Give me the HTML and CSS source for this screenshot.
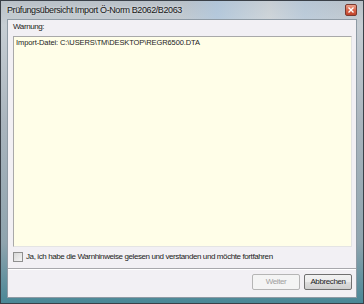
FILE: index.html
```html
<!DOCTYPE html>
<html lang="de">
<head>
  <meta charset="UTF-8">
  <title>Prüfungsübersicht Import Ö-Norm B2062/B2063</title>
  <link rel="stylesheet" href="styles.css">
</head>
<body>
  <div class="window">
    <div class="titlebar">
      <span class="title">Prüfungsübersicht Import Ö-Norm B2062/B2063</span>
      <span class="close-btn">
        <svg width="6" height="6" viewBox="0 0 6 6"><path d="M0.5 0.5 L5.5 5.5 M5.5 0.5 L0.5 5.5" stroke="#fff" stroke-width="1.4"/></svg>
      </span>
    </div>
    <div class="client">
      <div class="label">Warnung:</div>
      <div class="textbox">Import-Datei: C:\USERS\TM\DESKTOP\REGR6500.DTA</div>
      <label class="check-row">
        <span class="checkbox"></span>
        <span>Ja, ich habe die Warnhinweise gelesen und verstanden und möchte fortfahren</span>
      </label>
      <div class="separator"></div>
      <div class="buttons">
        <span class="btn disabled">Weiter</span>
        <span class="btn">Abbrechen</span>
      </div>
    </div>
  </div>
</body>
</html>
```

FILE: styles.css
```css
body {
  margin: 0;
  padding: 0;
  font-family: "Liberation Sans", Arial, sans-serif;
  font-size: 8px;
  letter-spacing: -0.4px;
  color: #222;
  background-color: #2f6470;
}
.window {
  width: 364px;
  height: 304px;
  box-sizing: border-box;
  display: flex;
  flex-direction: column;
  padding: 0 6px 5px 6px;
  border: 1px solid #3a4048;
  background: linear-gradient(180deg, #b9c1c8 0%, #c7ced4 8%, #aab5be 40%, #8fa4ae 80%, #4a8796 100%);
}
.titlebar {
  height: 18px;
  display: flex;
  align-items: center;
  justify-content: space-between;
  background: linear-gradient(90deg, rgba(255,255,255,0) 0%, rgba(255,255,255,0) 50%, rgba(170,200,230,0.55) 60%, rgba(255,255,255,0.2) 75%, rgba(180,205,230,0.45) 85%, rgba(255,255,255,0) 100%);
}
.title {
  font-size: 9px;
  letter-spacing: -0.4px;
  color: #161616;
  text-shadow: 0 0 3px rgba(255,255,255,0.8);
}
.close-btn {
  width: 10px;
  height: 10px;
  display: flex;
  align-items: center;
  justify-content: center;
  border: 1px solid #7a3a30;
  border-radius: 2px;
  background: linear-gradient(180deg, #eca28c 0%, #d8654a 50%, #c0432a 100%);
}
.client {
  flex: 1;
  display: flex;
  flex-direction: column;
  background-color: #f2f0f4;
  border: 1px solid #8e9aa4;
  padding: 2px 4px 0 5px;
}
.label {
  height: 10px;
  line-height: 10px;
  margin-bottom: 4px;
}
.textbox {
  flex: 1;
  background-color: #fffee8;
  border: 1px solid #a9a9a9;
  border-right-color: #e4e4e4;
  border-bottom-color: #e4e4e4;
  padding: 1px 2px;
  line-height: 10px;
  font-size: 7.5px;
  letter-spacing: -0.1px;
}
.check-row {
  display: flex;
  align-items: center;
  gap: 3px;
  height: 13px;
  margin-top: 3px;
}
.checkbox {
  width: 8px;
  height: 8px;
  border: 1px solid #8f8f8f;
  background: linear-gradient(135deg, #d8d8d8 0%, #f4f4f4 100%);
}
.separator {
  height: 0;
  border-top: 1px solid #a8a8ac;
  border-bottom: 1px solid #ffffff;
  margin: 5px -4px 0 -5px;
}
.buttons {
  height: 27px;
  display: flex;
  justify-content: flex-end;
  align-items: flex-start;
  gap: 4px;
  padding-top: 4px;
  box-sizing: border-box;
}
.btn {
  width: 46px;
  height: 14px;
  line-height: 14px;
  text-align: center;
  border: 1px solid #707070;
  border-radius: 2px;
  background: linear-gradient(180deg, #f2f2f2 0%, #ebebeb 50%, #dddddd 51%, #cfcfcf 100%);
}
.btn.disabled {
  color: #a0a0a0;
  border-color: #b5b5b5;
  background: #f4f4f4;
}
```
